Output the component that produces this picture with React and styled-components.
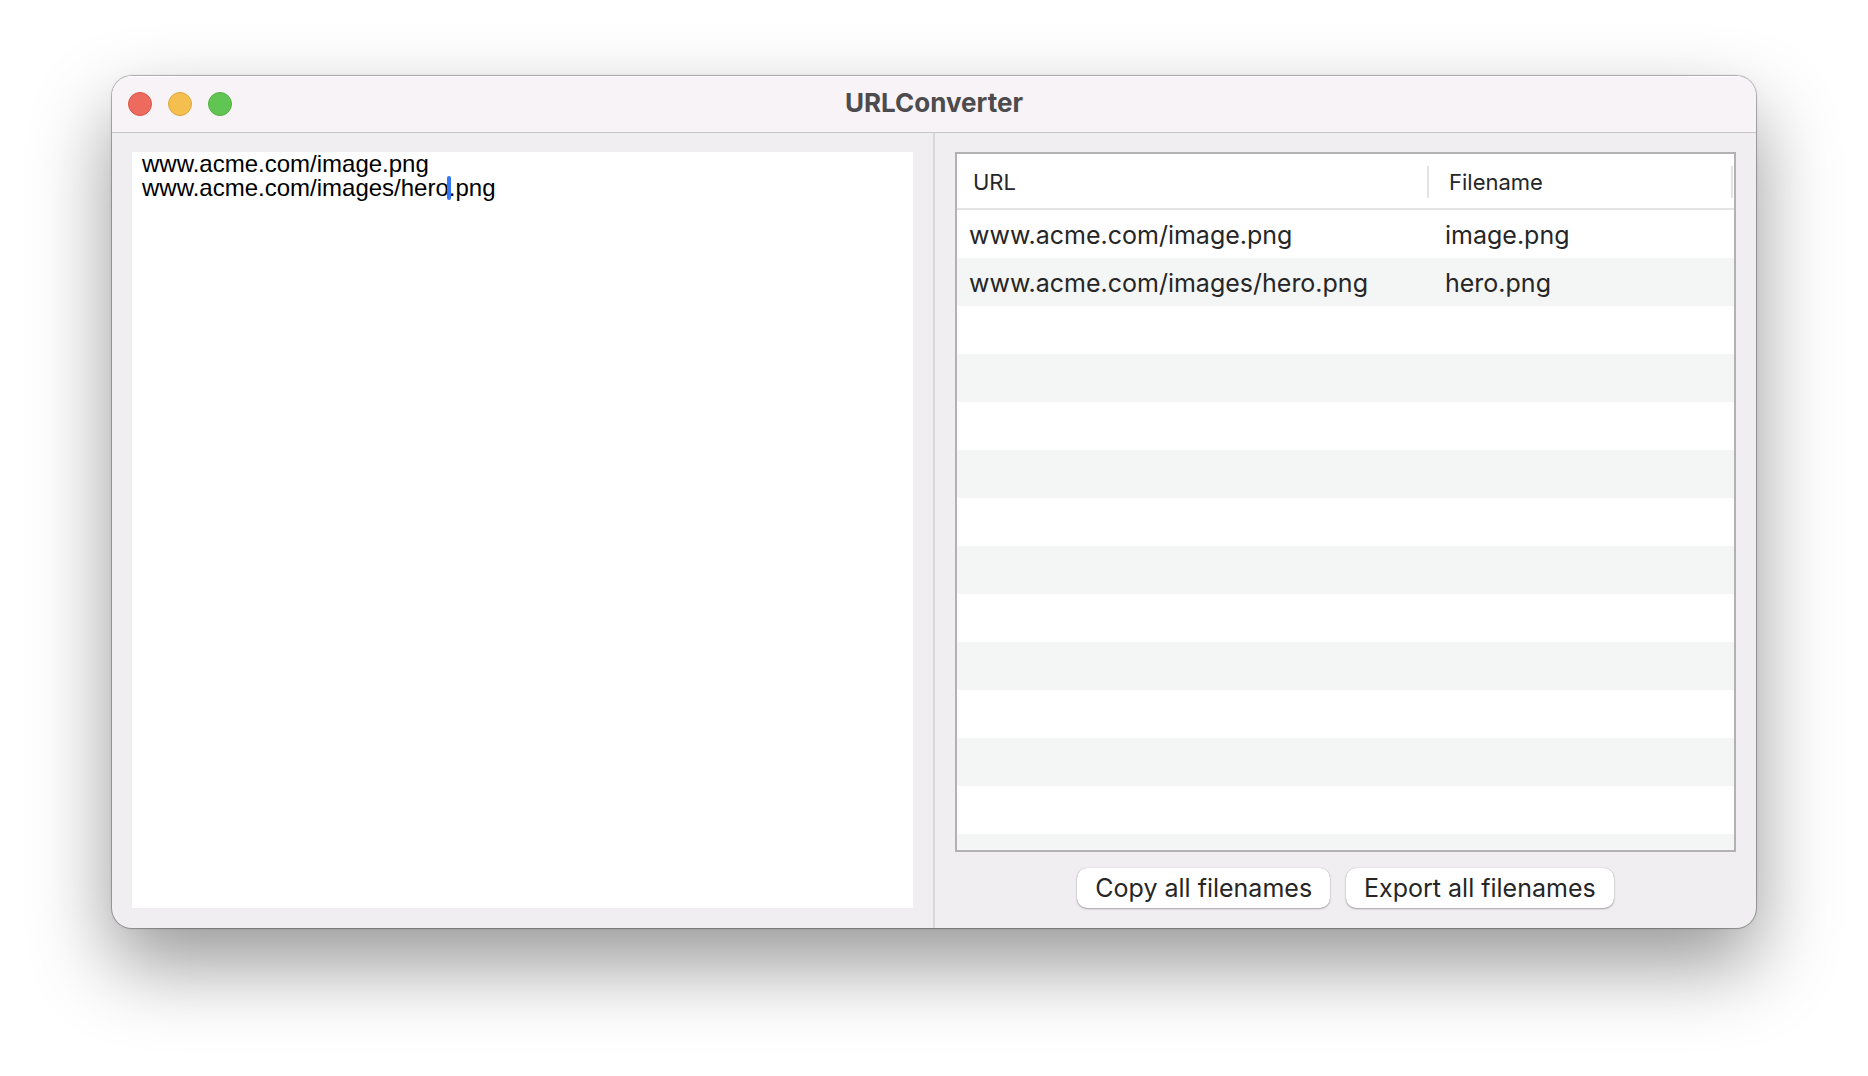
import React, { useLayoutEffect, useState } from "react";
import styled, { createGlobalStyle } from "styled-components";

const initialText = "www.acme.com/image.png\nwww.acme.com/images/hero.png";
const initialCaret = initialText.lastIndexOf(".");

const LINE_HEIGHT = 24;
const EDITOR_PADDING = 10;
const EDITOR_FONT = '24px "Liberation Sans", Arial, sans-serif';

const GlobalStyle = createGlobalStyle`
  * {
    box-sizing: border-box;
  }

  body {
    margin: 0;
    background-color: white;
    font-family: Inter, "Open Sans", sans-serif;
    color: #262626;
  }
`;

const StylePage = styled.div`
  display: flex;
  min-height: 100vh;
  padding: 76px 112px 148px;
`;

const StyleWindow = styled.main`
  display: flex;
  flex-flow: column nowrap;
  flex: 1;
  min-width: 0;

  // Appearance
  overflow: hidden;
  border-radius: 20px;
  background-color: #f0eef1;
  box-shadow:
    0 0 0 1px rgba(0, 0, 0, 0.22),
    0 0 3px rgba(0, 0, 0, 0.2),
    0 36px 80px rgba(0, 0, 0, 0.41);
`;

const StyleTitleBar = styled.header`
  display: grid;
  grid-template-columns: 1fr auto 1fr;
  align-items: center;
  height: 57px;
  padding: 0 16px;
  border-bottom: 1px solid #c9c6ca;
  background-color: #f7f3f7;
  box-shadow: inset 0 1px 0 white;

  h1 {
    margin: 0;
    padding-bottom: 2px;
    font-size: 26px;
    line-height: 32px;
    font-weight: 700;
    color: #4c4b4d;
  }
`;

const StyleTrafficLights = styled.div`
  display: flex;
  gap: 16px;
`;

const TrafficLight = styled.button`
  width: 24px;
  height: 24px;
  padding: 0;
  border: 1px solid ${(props) => props.$border};
  border-radius: 50%;
  background-color: ${(props) => props.$color};
`;

const StylePanes = styled.div`
  display: grid;
  grid-template-columns: 1fr 2px 1fr;
  flex: 1;
`;

const Divider = styled.div`
  background-color: #d9d7da;
`;

const StylePane = styled.section`
  display: flex;
  flex-flow: column nowrap;
  min-width: 0;
  padding: 19px 20px 20px;
`;

const StyleEditor = styled.div`
  position: relative;
  display: flex;
  flex: 1;

  textarea {
    flex: 1;
    min-width: 0;
    padding: 0 ${EDITOR_PADDING}px;
    border: none;
    outline: none;
    resize: none;
    background-color: white;
    font: ${EDITOR_FONT};
    line-height: ${LINE_HEIGHT}px;
    color: black;
    caret-color: transparent;
  }
`;

const Caret = styled.span`
  position: absolute;
  width: 4px;
  height: ${LINE_HEIGHT}px;
  border-radius: 2px;
  background-color: #3478f6;
  pointer-events: none;
`;

const StyleTableView = styled.div`
  flex: 1;
  overflow: hidden;
  border: 2px solid #b3b1b4;
  background: repeating-linear-gradient(
      white 0 48px,
      #f4f5f5 48px 96px
    )
    0 56px;
`;

const StyleTable = styled.table`
  width: 100%;
  table-layout: fixed;
  border-collapse: separate;
  border-spacing: 0;

  th {
    padding: 12px 1px 10px 0;
    border-bottom: 2px solid #e3e3e3;
    background-color: white;
    text-align: left;
    font-size: 22px;
    line-height: 32px;
    font-weight: 400;
  }

  th:first-child {
    width: 472px;
    padding-right: 0;
  }

  td {
    height: 48px;
    padding: 2px 12px 0;
    font-size: 25px;
    line-height: 32px;
  }

  td + td {
    padding-left: 16px;
  }
`;

const HeaderLabel = styled.div`
  padding-left: ${(props) => (props.$first ? 16 : 20)}px;
  border-right: 2px solid #e3e3e3;
`;

const StyleActions = styled.div`
  display: flex;
  justify-content: center;
  gap: 16px;
  padding-top: 16px;
`;

const ActionButton = styled.button`
  height: 40px;
  padding: 0 18px;
  border: none;
  border-radius: 10px;
  background-color: white;
  box-shadow:
    0 0 1px rgba(0, 0, 0, 0.3),
    0 1px 2px rgba(0, 0, 0, 0.3);
  font-family: inherit;
  font-size: 25px;
  line-height: 32px;
  color: inherit;
`;

function filenameOf(url) {
  return url.split("/").pop();
}

function TitleBar() {
  return (
    <StyleTitleBar>
      <StyleTrafficLights>
        <TrafficLight aria-label="Close" $color="#ed6a5e" $border="#d9564b" />
        <TrafficLight aria-label="Minimize" $color="#f5bf4f" $border="#dba73e" />
        <TrafficLight aria-label="Zoom" $color="#61c554" $border="#52ae43" />
      </StyleTrafficLights>
      <h1>URLConverter</h1>
    </StyleTitleBar>
  );
}

function Editor({ value, onChange }) {
  const [caret, setCaret] = useState(initialCaret);
  const [left, setLeft] = useState(0);

  const lines = value.slice(0, caret).split("\n");
  const current = lines[lines.length - 1];

  useLayoutEffect(() => {
    const context = document.createElement("canvas").getContext("2d");
    context.font = EDITOR_FONT;
    setLeft(EDITOR_PADDING + Math.round(context.measureText(current).width) - 2);
  }, [current]);

  return (
    <StyleEditor>
      <textarea
        aria-label="URLs"
        spellCheck={false}
        value={value}
        onChange={(e) => onChange(e.target.value)}
        onSelect={(e) => setCaret(e.target.selectionEnd)}
      />
      <Caret style={{ left, top: (lines.length - 1) * LINE_HEIGHT }} />
    </StyleEditor>
  );
}

function UrlTable({ urls }) {
  return (
    <StyleTableView>
      <StyleTable>
        <thead>
          <tr>
            <th scope="col">
              <HeaderLabel $first>URL</HeaderLabel>
            </th>
            <th scope="col">
              <HeaderLabel>Filename</HeaderLabel>
            </th>
          </tr>
        </thead>
        <tbody>
          {urls.map((url, i) => (
            <tr key={i}>
              <td>{url}</td>
              <td>{filenameOf(url)}</td>
            </tr>
          ))}
        </tbody>
      </StyleTable>
    </StyleTableView>
  );
}

function App() {
  const [text, setText] = useState(initialText);
  const urls = text.split("\n").filter(Boolean);

  const copyAll = () =>
    navigator.clipboard.writeText(urls.map(filenameOf).join("\n"));

  return (
    <StylePage>
      <GlobalStyle />
      <StyleWindow>
        <TitleBar />
        <StylePanes>
          <StylePane>
            <Editor value={text} onChange={setText} />
          </StylePane>
          <Divider />
          <StylePane>
            <UrlTable urls={urls} />
            <StyleActions>
              <ActionButton onClick={copyAll}>Copy all filenames</ActionButton>
              <ActionButton>Export all filenames</ActionButton>
            </StyleActions>
          </StylePane>
        </StylePanes>
      </StyleWindow>
    </StylePage>
  );
}

export default App;
